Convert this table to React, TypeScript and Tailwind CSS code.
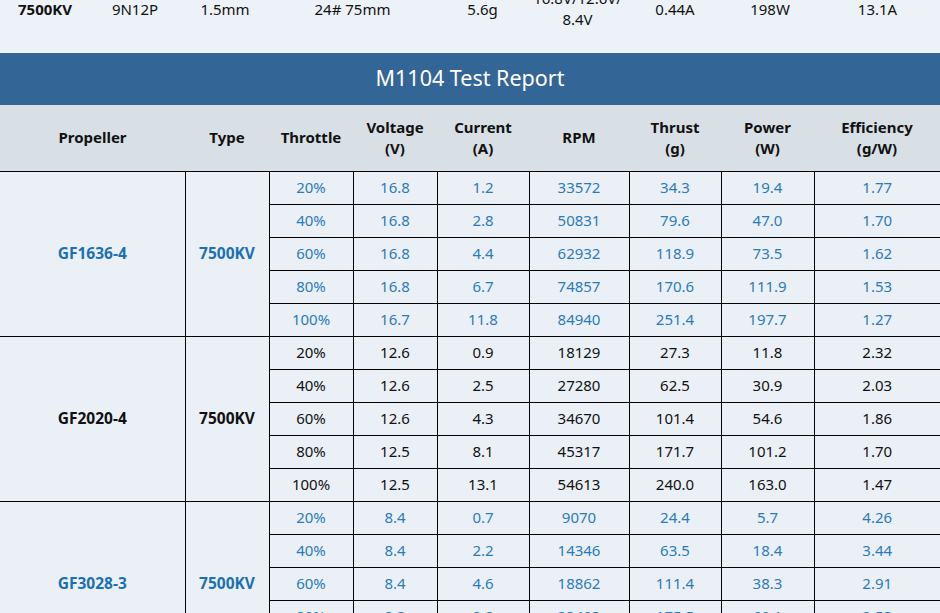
import React from "react";

type Row = [string, string, string, string, string, string, string];
type Group = { prop: string; type: string; blue: boolean; rows: Row[] };

const groups: Group[] = [
  {
    prop: "GF1636-4",
    type: "7500KV",
    blue: true,
    rows: [
      ["20%", "16.8", "1.2", "33572", "34.3", "19.4", "1.77"],
      ["40%", "16.8", "2.8", "50831", "79.6", "47.0", "1.70"],
      ["60%", "16.8", "4.4", "62932", "118.9", "73.5", "1.62"],
      ["80%", "16.8", "6.7", "74857", "170.6", "111.9", "1.53"],
      ["100%", "16.7", "11.8", "84940", "251.4", "197.7", "1.27"],
    ],
  },
  {
    prop: "GF2020-4",
    type: "7500KV",
    blue: false,
    rows: [
      ["20%", "12.6", "0.9", "18129", "27.3", "11.8", "2.32"],
      ["40%", "12.6", "2.5", "27280", "62.5", "30.9", "2.03"],
      ["60%", "12.6", "4.3", "34670", "101.4", "54.6", "1.86"],
      ["80%", "12.5", "8.1", "45317", "171.7", "101.2", "1.70"],
      ["100%", "12.5", "13.1", "54613", "240.0", "163.0", "1.47"],
    ],
  },
  {
    prop: "GF3028-3",
    type: "7500KV",
    blue: true,
    rows: [
      ["20%", "8.4", "0.7", "9070", "24.4", "5.7", "4.26"],
      ["40%", "8.4", "2.2", "14346", "63.5", "18.4", "3.44"],
      ["60%", "8.4", "4.6", "18862", "111.4", "38.3", "2.91"],
      ["80%", "8.3", "8.8", "23403", "175.5", "69.1", "2.53"],
      ["100%", "8.3", "12.9", "27610", "238.2", "106.6", "2.23"],
    ],
  },
];

const widths = [185, 84, 84, 84, 92, 100, 92, 93, 126];

export default function App() {
  return (
    <div
      className="w-[940px] bg-[#ebf0f6] text-[15px] text-[#111]"
      style={{ fontFamily: '"Noto Sans", "Open Sans", sans-serif' }}
    >
      {/* previous table tail */}
      <div className="h-[53px] overflow-hidden bg-[#edf2f8] border-b border-[#f4f7fa]">
        <div className="flex h-[44px] -mt-[13px] items-center text-center leading-[21px]">
          <div className="w-[90px] font-bold">7500KV</div>
          <div className="w-[90px]">9N12P</div>
          <div className="w-[90px]">1.5mm</div>
          <div className="w-[165px]">24# 75mm</div>
          <div className="w-[95px]">5.6g</div>
          <div className="w-[95px]">
            16.8V/12.6V/
            <br />
            8.4V
          </div>
          <div className="w-[100px]">0.44A</div>
          <div className="w-[90px]">198W</div>
          <div className="w-[125px]">13.1A</div>
        </div>
      </div>

      {/* title bar */}
      <div className="flex h-[52px] items-center justify-center bg-[#336597] pb-[1px] text-[21.5px] text-white">
        M1104 Test Report
      </div>

      <table className="w-[940px] table-fixed border-collapse">
        <colgroup>
          {widths.map((w, i) => (
            <col key={i} style={{ width: w }} />
          ))}
        </colgroup>
        <thead>
          <tr className="h-[66px] bg-[#d8dfe5] font-bold text-[15px] leading-[21px] text-[#111]">
            <th className="p-0">Propeller</th>
            <th className="p-0">Type</th>
            <th className="p-0">Throttle</th>
            <th className="p-0">
              Voltage
              <br />
              (V)
            </th>
            <th className="p-0">
              Current
              <br />
              (A)
            </th>
            <th className="p-0">RPM</th>
            <th className="p-0">
              Thrust
              <br />
              (g)
            </th>
            <th className="p-0">
              Power
              <br />
              (W)
            </th>
            <th className="p-0">
              Efficiency
              <br />
              (g/W)
            </th>
          </tr>
        </thead>
        <tbody>
          {groups.map((g) =>
            g.rows.map((r, ri) => (
              <tr
                key={g.prop + ri}
                className={`h-[33px] ${g.blue ? "text-[#2a7bbd]" : "text-[#111]"}`}
              >
                {ri === 0 && (
                  <>
                    <td
                      rowSpan={5}
                      className={`border-t border-black p-0 text-center text-[15.5px] font-bold ${
                        g.blue ? "text-[#1b70b3]" : "text-[#111]"
                      }`}
                    >
                      {g.prop}
                    </td>
                    <td
                      rowSpan={5}
                      className={`border-t border-l border-black p-0 text-center text-[15.5px] font-bold ${
                        g.blue ? "text-[#1b70b3]" : "text-[#111]"
                      }`}
                    >
                      {g.type}
                    </td>
                  </>
                )}
                {r.map((v, ci) => (
                  <td
                    key={ci}
                    className="border-t border-l border-black p-0 pb-[2px] text-center leading-[20px]"
                  >
                    {v}
                  </td>
                ))}
              </tr>
            ))
          )}
        </tbody>
      </table>
    </div>
  );
}
